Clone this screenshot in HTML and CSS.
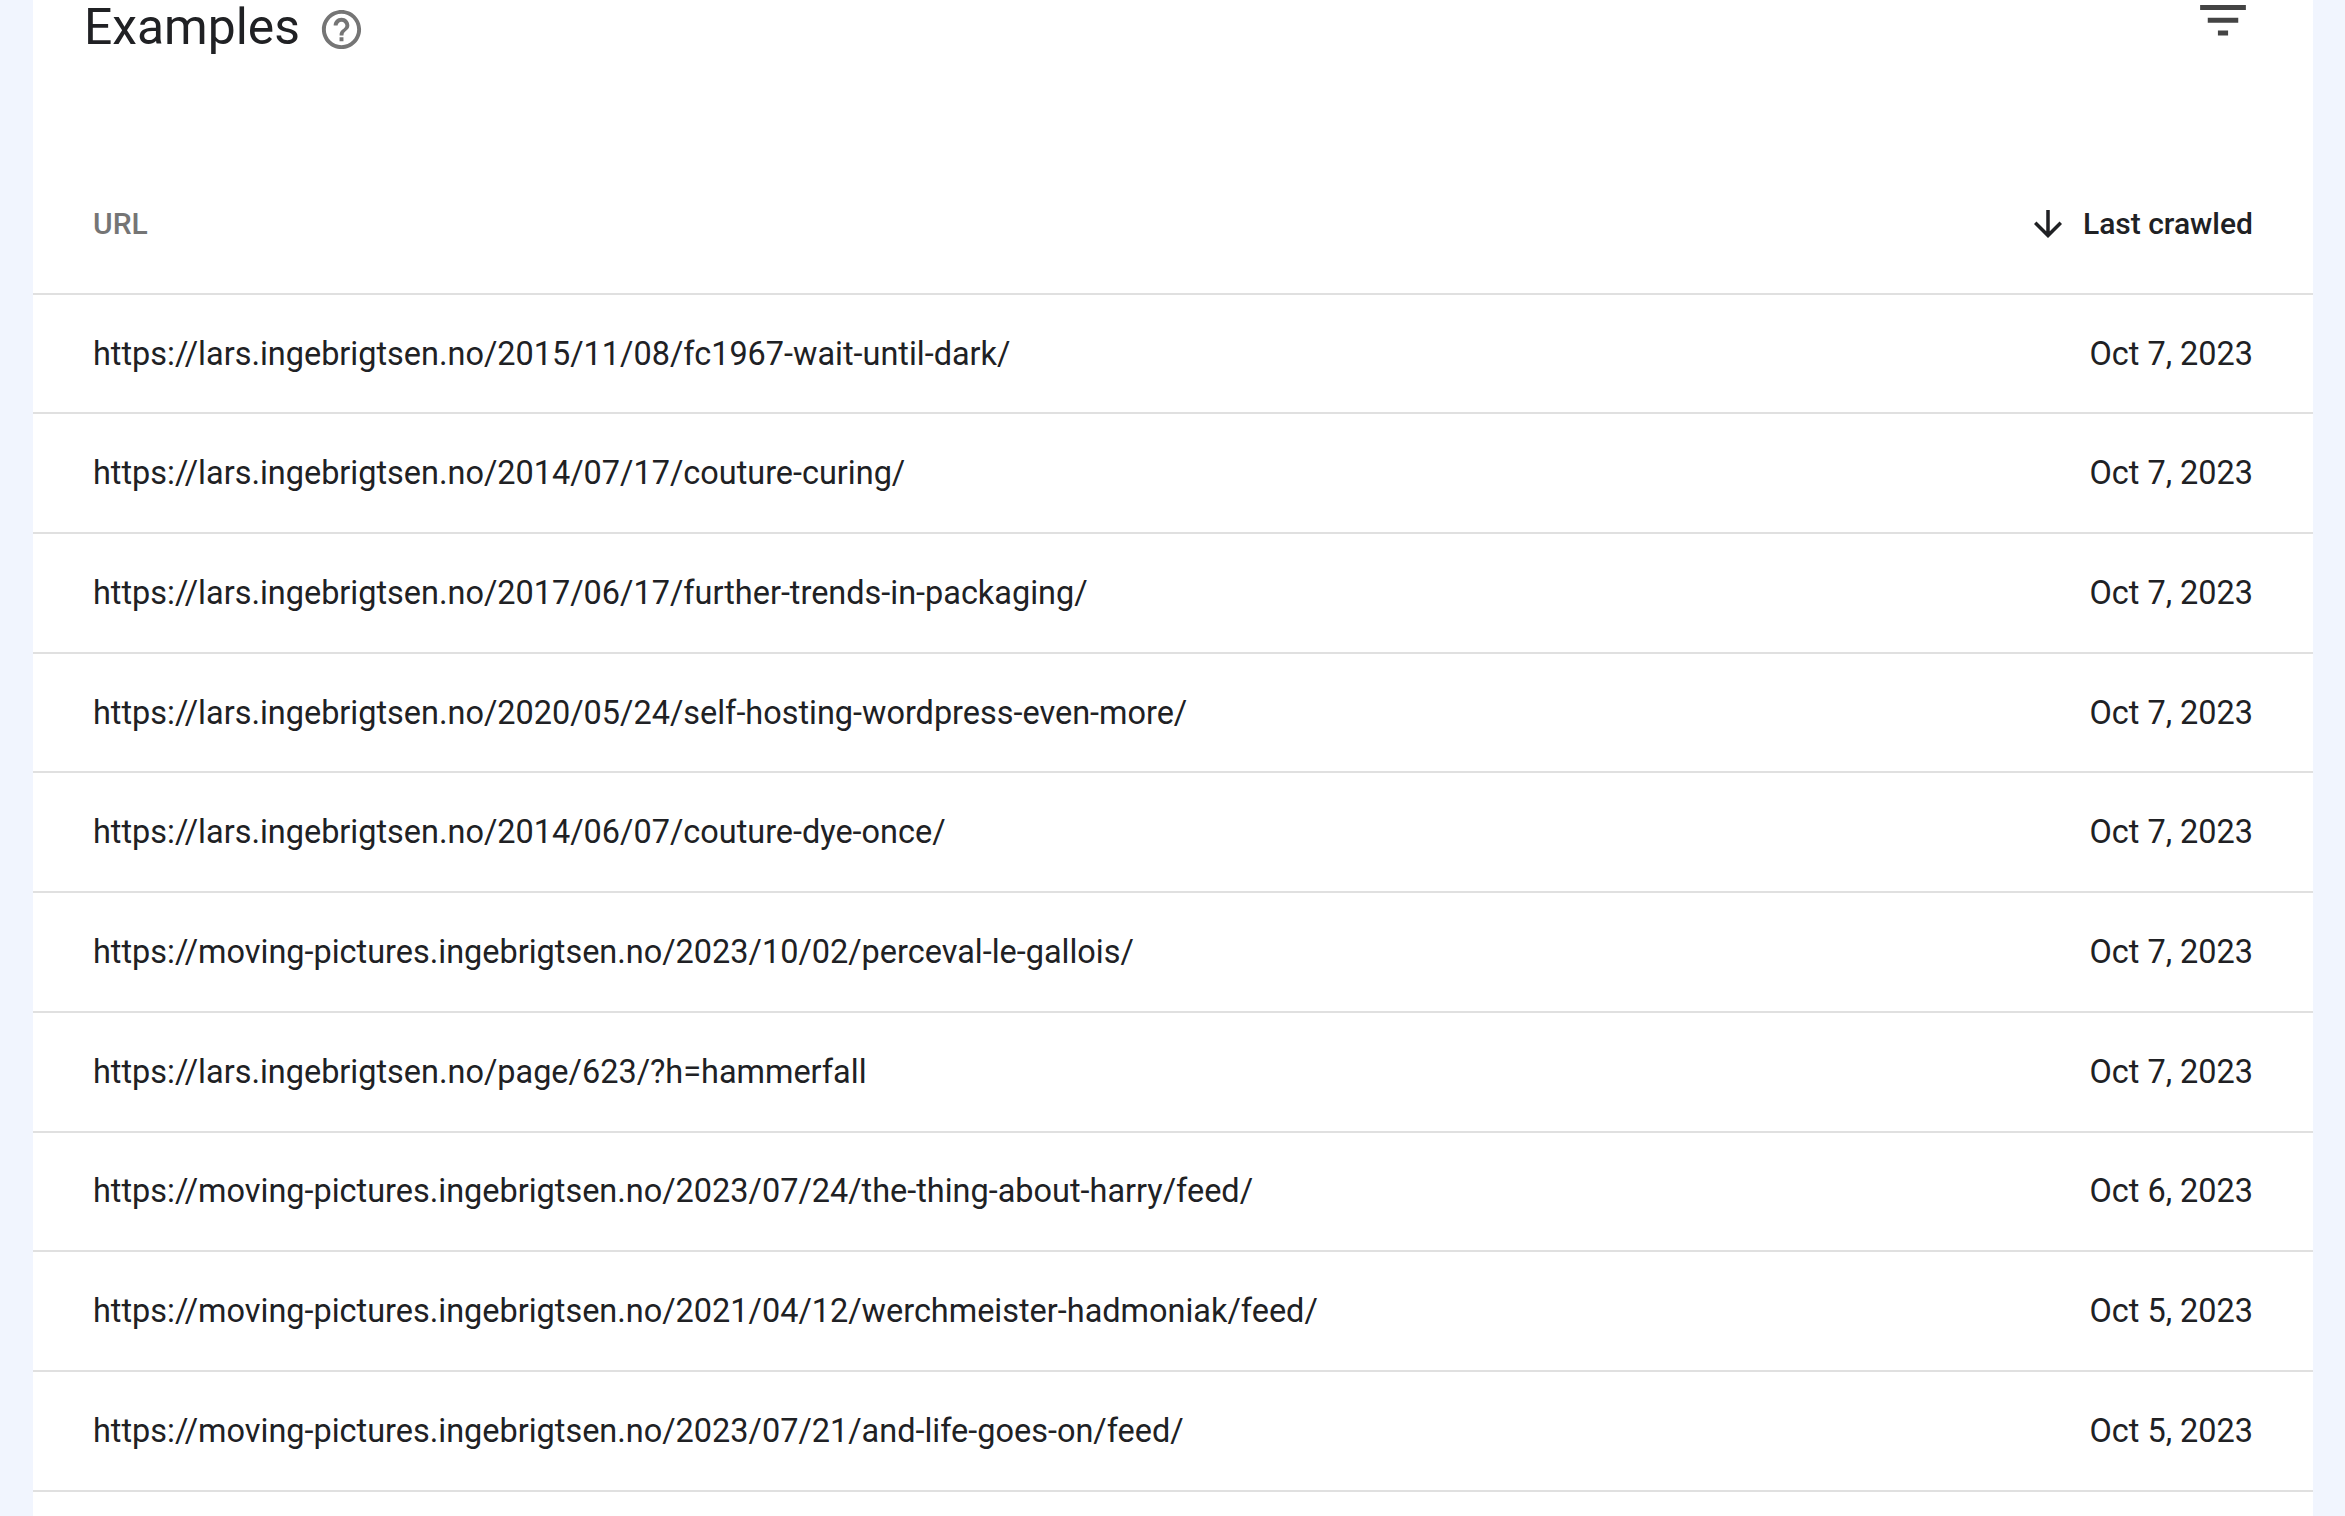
FILE: index.html
```html
<!DOCTYPE html>
<html lang="en">
<head>
<meta charset="utf-8">
<title>Examples</title>
<link rel="stylesheet" href="styles.css">
</head>
<body>
<main class="card">
  <header class="card-head">
    <div class="title-group">
      <h2 class="title">Examples</h2>
      <svg class="help" viewBox="0 0 24 24" aria-hidden="true"><path d="M11 18h2v-2h-2v2zm1-16C6.48 2 2 6.48 2 12s4.48 10 10 10 10-4.48 10-10S17.52 2 12 2zm0 18c-4.41 0-8-3.59-8-8s3.59-8 8-8 8 3.59 8 8-3.59 8-8 8zm0-14c-2.21 0-4 1.79-4 4h2c0-1.1.9-2 2-2s2 .9 2 2c0 2-3 1.75-3 5h2c0-2.25 3-2.5 3-5 0-2.21-1.79-4-4-4z"/></svg>
    </div>
    <svg class="filter" viewBox="3 6 18 12" aria-hidden="true"><path d="M10 18h4v-2h-4v2zM3 6v2h18V6H3zm3 7h12v-2H6v2z"/></svg>
  </header>
  <div class="table">
    <div class="row head-row">
      <span class="col-url">URL</span>
      <span class="col-sort">
        <svg class="arrow" viewBox="4 4 16 16" aria-hidden="true"><path d="M20 12l-1.41-1.41L13 16.17V4h-2v12.17l-5.58-5.59L4 12l8 8 8-8z"/></svg>
        Last crawled
      </span>
    </div>
    <div class="row"><span>https://lars.ingebrigtsen.no/2015/11/08/fc1967-wait-until-dark/</span><span>Oct 7, 2023</span></div>
    <div class="row"><span>https://lars.ingebrigtsen.no/2014/07/17/couture-curing/</span><span>Oct 7, 2023</span></div>
    <div class="row"><span>https://lars.ingebrigtsen.no/2017/06/17/further-trends-in-packaging/</span><span>Oct 7, 2023</span></div>
    <div class="row"><span>https://lars.ingebrigtsen.no/2020/05/24/self-hosting-wordpress-even-more/</span><span>Oct 7, 2023</span></div>
    <div class="row"><span>https://lars.ingebrigtsen.no/2014/06/07/couture-dye-once/</span><span>Oct 7, 2023</span></div>
    <div class="row"><span>https://moving-pictures.ingebrigtsen.no/2023/10/02/perceval-le-gallois/</span><span>Oct 7, 2023</span></div>
    <div class="row"><span>https://lars.ingebrigtsen.no/page/623/?h=hammerfall</span><span>Oct 7, 2023</span></div>
    <div class="row"><span>https://moving-pictures.ingebrigtsen.no/2023/07/24/the-thing-about-harry/feed/</span><span>Oct 6, 2023</span></div>
    <div class="row"><span>https://moving-pictures.ingebrigtsen.no/2021/04/12/werchmeister-hadmoniak/feed/</span><span>Oct 5, 2023</span></div>
    <div class="row"><span>https://moving-pictures.ingebrigtsen.no/2023/07/21/and-life-goes-on/feed/</span><span>Oct 5, 2023</span></div>
  </div>
</main>
</body>
</html>
```
FILE: styles.css
```css
html, body {
  margin: 0;
  height: 100%;
  overflow: hidden;
}
body {
  background: #f1f5fe;
  padding: 0 32px 0 33px;
  font-family: Roboto, "Liberation Sans", sans-serif;
  color: #202124;
}
.card {
  background: #fff;
  height: 100%;
}
.card-head {
  display: flex;
  justify-content: space-between;
  align-items: flex-start;
  height: 175px;
  padding: 0 67px 0 51px;
}
.title-group {
  display: flex;
  align-items: center;
  gap: 18px;
}
.title {
  margin: 0;
  font-size: 49.8px;
  font-weight: 400;
  line-height: 54px;
}
.help {
  width: 47px;
  height: 47px;
  fill: #757575;
  margin-top: 4px;
}
.filter {
  width: 46px;
  height: 30.5px;
  fill: #444;
  margin-top: 5px;
}
.row {
  display: flex;
  justify-content: space-between;
  align-items: center;
  box-sizing: border-box;
  height: 119.7px;
  padding: 0 60px 0 60px;
  border-bottom: 2px solid #e0e0e0;
  font-size: 32.45px;
}
.head-row {
  font-size: 30px;
  font-weight: 500;
  padding-bottom: 20px;
}
.col-url {
  color: #757575;
}
.col-sort {
  display: flex;
  align-items: center;
  gap: 21px;
}
.arrow {
  width: 28px;
  height: 28px;
  fill: #202124;
}
```
